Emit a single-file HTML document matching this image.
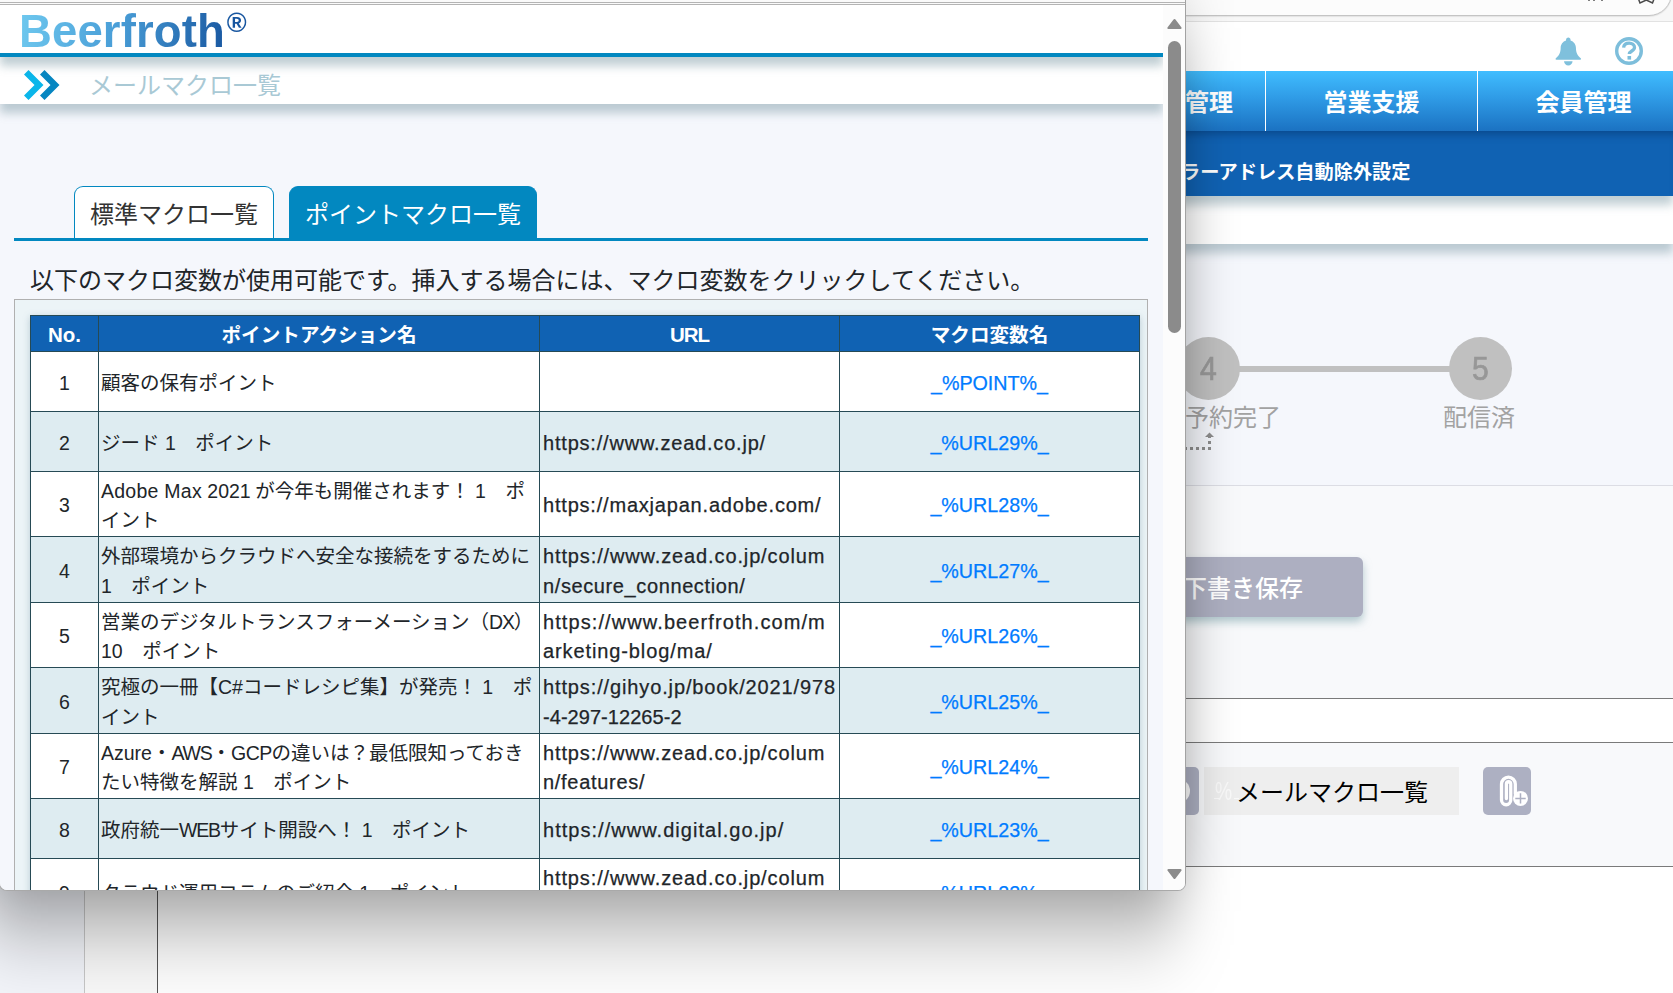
<!DOCTYPE html>
<html lang="ja">
<head>
<meta charset="utf-8">
<title>メールマクロ一覧</title>
<style>
*{box-sizing:border-box;margin:0;padding:0}
html,body{width:1673px;height:993px;overflow:hidden;background:#fff}
body{position:relative;font-family:"Liberation Sans","Noto Sans CJK JP",sans-serif;color:#212529}
.abs{position:absolute}
/* ---------- background page ---------- */
#bg{z-index:0;position:absolute;left:0;top:0;width:1673px;height:993px;overflow:hidden;background:#fff}
#chrome{position:absolute;left:0;top:0;width:1673px;height:22px;background:#f7f7f7;border-bottom:1px solid #e2e2e2}
#addr{position:absolute;left:900px;top:-30px;width:772px;height:46px;border-radius:23px;background:#fcfcfc;border:1px solid #c4c4c4;box-shadow:0 1px 1px rgba(0,0,0,.08)}
#hdr{position:absolute;left:0;top:22px;width:1673px;height:49px;background:#fff}
#nav{z-index:6;position:absolute;left:0;top:71px;width:1673px;height:60px;background:linear-gradient(#40bdff 0%,#2f9be6 45%,#1b72c2 100%)}
#nav .it{position:absolute;top:0;height:60px;width:212px;border-left:1px solid #fff;color:#fff;font-weight:bold;font-size:24px;line-height:63px;text-align:center;white-space:nowrap}
#sub{z-index:5;position:absolute;left:0;top:131px;width:1673px;height:65px;background:#1062b3;box-shadow:inset 0 9px 8px -6px rgba(0,40,90,.45), 0 9px 9px rgba(100,135,148,.4)}
#sub span{position:absolute;top:9px;line-height:65px;color:#fff;font-weight:bold;font-size:19.2px;white-space:nowrap}
#band{z-index:4;position:absolute;left:0;top:196px;width:1673px;height:48px;background:#fff;box-shadow:0 9px 9px rgba(100,135,148,.4)}
#main{position:absolute;left:157px;top:244px;width:1516px;height:241px;background:#f5f7fc}
#main2{position:absolute;left:157px;top:485px;width:1516px;height:213px;background:#f8f9fb;border-top:1px solid #dcdde4}
.circle{position:absolute;width:63px;height:63px;border-radius:50%;background:#c0c0c0;color:#979797;font-size:33.5px;line-height:63px;text-align:center;font-weight:normal;-webkit-text-stroke:.7px #979797}
.circle b{display:inline-block;font-weight:normal;transform:scaleX(.9)}
.steplbl{position:absolute;color:#a2a2a2;font-size:24px;line-height:30px;white-space:nowrap;font-weight:400}
#draft{position:absolute;left:1123px;top:557px;width:240px;height:60px;border-radius:6px;background:#adafc1;color:#fff;font-size:24px;line-height:64px;text-align:center;box-shadow:0 5px 8px rgba(120,160,170,.55);font-weight:500}
.hl{position:absolute;left:157px;width:1516px;height:1px;background:#7a7a7a}
#tool{position:absolute;left:157px;top:743px;width:1516px;height:123px;background:#f8f9fb}
.ibtn{position:absolute;top:767px;height:48px;border-radius:5px;background:#adb0c2}
#macbtn{position:absolute;left:1204px;top:767px;width:255px;height:48px;background:#eee;font-size:24px;line-height:48px;color:#000;white-space:nowrap}
#side{position:absolute;left:0;top:244px;width:158px;height:749px;background:linear-gradient(to right,#f4f6fb 84px,#fafafa 84px);border-right:1px solid #555}
#side i{position:absolute;left:84px;top:0;width:1px;height:749px;background:#c8c8c8}
/* ---------- popup ---------- */
#shadow{z-index:10;position:absolute;left:-16px;top:419.500px;width:1193px;height:490.500px;background:rgba(0,0,0,.47);filter:blur(28px);transform-origin:50% 100%;transform:scaleY(1.8)}
#pop{z-index:11;position:absolute;left:-1px;top:0;width:1187px;height:891px;overflow:hidden;background:#f5f7fc;border-radius:0 0 8px 8px;border-right:1px solid #a2a2a2;border-bottom:1px solid #a9a9a9;border-left:1px solid #a9a9a9}
#ptop{position:absolute;left:0;top:0;width:1187px;height:5px;background:#fafafa}
#ptop i{position:absolute;left:0;width:1187px;height:1px;background:#b4b4b4}
#content{position:absolute;left:0;top:5px;width:1163px;height:885px;overflow:hidden;background:#f5f7fc}
#logo{position:absolute;left:0;top:0;width:1163px;height:48px;background:#fff}
#logo span{position:absolute;left:19px;top:-1px;letter-spacing:.12px;font-size:45.5px;line-height:56px;font-weight:bold;white-space:nowrap;background:linear-gradient(100deg,#6fc9ef 0%,#4a9fd8 42%,#17559f 92%);-webkit-background-clip:text;background-clip:text;color:transparent;-webkit-text-fill-color:transparent}
#logo sup{font-size:27px;vertical-align:15.5px;line-height:0;margin-left:2px}
#bline{position:absolute;left:0;top:48px;width:1163px;height:4px;background:#0288c0}
#hshadow{position:absolute;left:0;top:0;width:1163px;height:52px;box-shadow:0 9px 9px rgba(100,135,148,.4)}
#ttl{position:absolute;left:0;top:52px;width:1163px;height:47px;background:#fff;box-shadow:0 9px 9px rgba(100,135,148,.4)}
#ttl span{position:absolute;left:89px;top:0;line-height:58px;font-size:24px;color:#a9c9d5;white-space:nowrap}
.tab{position:absolute;top:181px;height:53px;font-size:24px;line-height:56px;padding:0 15px;border:1px solid #0288c0;border-bottom:none;border-radius:9px 9px 0 0;white-space:nowrap}
#tabline{position:absolute;left:14px;top:233px;width:1134px;height:3px;background:#0288c0}
#lead{position:absolute;left:30px;top:257.5px;font-size:24px;line-height:36px;color:#212529;white-space:nowrap}
#box{position:absolute;left:14px;top:294px;width:1134px;height:620px;background:#ecf4f7;border:1px solid #b0b0b0}
table{position:absolute;left:15px;top:15px;width:1109px;border-collapse:collapse;table-layout:fixed;box-shadow:0 2px 7px rgba(90,130,150,.36);background:#fff;font-size:19.6px;line-height:29.4px}
th,td{border:1px solid #264a55;padding:4px 2px 0;vertical-align:middle;overflow:hidden;white-space:nowrap}
td.u,.l{font-size:20px;letter-spacing:.8px}
td.u,td.m{-webkit-text-stroke:.25px}
td{font-size:19.5px}
td.u{padding-left:3px}
.k{letter-spacing:-1.2px}
th{background:#1062b3;color:#fff;font-weight:bold;text-align:center;height:36px;line-height:30px;padding-top:3px}
td.c{text-align:center}
td.m{text-align:center;color:#007bff;font-size:19.7px}
tr.e td{background:#deecf1}
/* scrollbar */
#sb{position:absolute;left:1163px;top:5px;width:22px;height:885px;background:#fcfcfc}
#thumb{position:absolute;left:5px;top:36px;width:13px;height:292px;border-radius:7px;background:#8b8b8b}
</style>
</head>
<body>
<div id="bg">
  <div id="chrome"><div id="addr"></div><svg class="abs" style="left:1580px;top:0" width="90" height="6" viewBox="0 0 90 6"><path d="M58.500 -1L60 3 66.300 0 72.500 3 74 -1" fill="none" stroke="#4a4a4a" stroke-width="1.500"/><path d="M8 0h2M13 0h2M21 0h2" stroke="#555" stroke-width="1.600"/></svg></div>
  <div id="hdr">
    <svg class="abs" style="left:1553.700px;top:14.600px" width="28.600" height="30.600" viewBox="0 0 28 30"><path fill="#7fc0dc" d="M14 0.6c-1.2 0-2.2 1-2.2 2.1v0.7C8.600 4.400 6.500 7.400 6.500 10.900c0 5-1.700 7.400-4.700 9.900-0.600 0.500-0.300 1.500 0.500 1.500h23.400c0.800 0 1.100-1 0.500-1.500-3-2.500-4.700-4.900-4.700-9.900 0-3.500-2.100-6.500-5.300-7.500V2.700C16.200 1.600 15.200 0.600 14 0.600zM9.800 23.800c0.200 2.300 2 4.200 4.200 4.200s4-1.900 4.200-4.200z"/></svg>
    <svg class="abs" style="left:1614px;top:14px" width="30" height="30" viewBox="0 0 30 30"><circle cx="15" cy="15" r="12.300" fill="none" stroke="#7dbedb" stroke-width="3.400"/><path d="M9.600 11.600c0.300-2.800 2.500-4.400 5.500-4.400 3.100 0 5.400 1.700 5.400 4.300 0 3.600-5.200 3.400-5.200 6.600" fill="none" stroke="#7dbedb" stroke-width="3.300"/><rect x="13.500" y="20" width="3.600" height="3.600" fill="#7dbedb"/></svg>
  </div>
  <div id="nav">
    <div class="it" style="left:1053px;text-align:right;padding-right:32px">管理</div>
    <div class="it" style="left:1265px">営業支援</div>
    <div class="it" style="left:1477px">会員管理</div>
  </div>
  <div id="sub"><span style="left:1181px">ラーアドレス自動除外設定</span></div>
  <div id="band"></div>
  <div id="main"></div>
  <div id="main2"></div>
  <div class="abs" style="left:1209px;top:366px;width:271px;height:6px;background:#c0c0c0"></div>
  <div class="circle" style="left:1177px;top:337px"><b>4</b></div>
  <div class="circle" style="left:1449px;top:337px"><b>5</b></div>
  <div class="steplbl" style="left:1185px;top:403px">予約完了</div>
  <div class="steplbl" style="left:1443px;top:403px">配信済</div>
  <svg class="abs" style="left:1160px;top:430px" width="60" height="24" viewBox="0 0 60 24"><path d="M0 18.500H49.500V6" fill="none" stroke="#8d8d8d" stroke-width="3" stroke-dasharray="3 3"/><path d="M45 7L49.500 2.500 54 7z" fill="#8d8d8d"/></svg>
  <div id="draft">下書き保存</div>
  <div class="hl" style="top:698px"></div>
  <div class="hl" style="top:742px"></div>
  <div id="tool"></div>
  <div class="hl" style="top:866px"></div>
  <div class="ibtn" style="left:1151px;width:48px"><i style="position:absolute;left:15px;top:12px;width:24px;height:24px;border-radius:50%;background:#fff"></i></div>
  <div id="macbtn"><span style="position:absolute;left:11px;top:0;color:#f9f9f9;font-size:26px;font-weight:normal;transform:scaleX(.74);transform-origin:0 50%">%</span><i style="position:absolute;left:10px;top:31px;width:6px;height:1px;background:#fafafa"></i><i style="position:absolute;left:30px;top:31px;width:5px;height:1px;background:#fafafa"></i><span style="position:absolute;left:32px;top:2px">メールマクロ一覧</span></div>
  <div class="ibtn" style="left:1483px;width:48px">
    <svg width="48" height="48" viewBox="0 0 48 48"><path d="M32.300 27V17.100A6.900 6.900 0 0 0 18.500 17.100V33.100A4.620 4.620 0 0 0 27.750 33.100V16.800A2.180 2.180 0 0 0 23.400 16.800V31.500" fill="none" stroke="#fff" stroke-width="3.300" stroke-linecap="round"/><circle cx="37.500" cy="31.400" r="7.500" fill="#fff"/><path d="M37.500 26.200v10.400M32.300 31.400h10.400" stroke="#adb0c2" stroke-width="1.500"/></svg>
  </div>
  <div id="side"><i></i></div>
</div>

<div id="shadow"></div>
<div id="pop">
  <div id="ptop"><i style="top:2px"></i><i style="top:4px"></i></div>
  <div id="content">
    <div id="ttl">
      <svg class="abs" style="left:24px;top:13px" width="38" height="30" viewBox="0 0 38 30"><path d="M0 4.500L4.500 0 19.500 15 4.500 30 0 25.500 10.500 15z" fill="#0ab6ea"/><path d="M16 4.500L20.500 0 35.500 15 20.500 30 16 25.500 26.500 15z" fill="#0686c1"/></svg>
      <span>メールマクロ一覧</span>
    </div>
    <div id="hshadow"></div><div id="bline"></div>
    <div id="logo"><span>Beerfroth<sup>®</sup></span></div>
    <div class="tab" style="left:74px;background:#fff;color:#333">標準マクロ一覧</div>
    <div class="tab" style="left:289px;background:#0288c0;color:#fff">ポイントマクロ一覧</div>
    <div id="tabline"></div>
    <div id="lead">以下のマクロ変数が使用可能です。挿入する場合には、マクロ変数をクリックしてください。</div>
    <div id="box">
      <table>
        <colgroup><col style="width:68px"><col style="width:441px"><col style="width:300px"><col style="width:300px"></colgroup>
        <tr><th><span style="font-size:20.5px">No.</span></th><th>ポイントアクション名</th><th><span style="font-size:20.5px;letter-spacing:-1px">URL</span></th><th>マクロ変数名</th></tr>
        <tr style="height:60px"><td class="c">1</td><td>顧客の保有ポイント</td><td class="u"></td><td class="m">_%POINT%_</td></tr>
        <tr class="e" style="height:60px"><td class="c">2</td><td>ジード 1　ポイント</td><td class="u">https://www.zead.co.jp/</td><td class="m">_%URL29%_</td></tr>
        <tr style="height:65px"><td class="c">3</td><td><span style="letter-spacing:.25px">Adobe Max</span> 2021<span style="letter-spacing:-1px"> </span>が今年も開催されます！ 1　ポ<br>イント</td><td class="u">https://maxjapan.adobe.com/</td><td class="m">_%URL28%_</td></tr>
        <tr class="e" style="height:66px"><td class="c">4</td><td>外部環境からクラウドへ安全な接続をするために<br>1　ポイント</td><td class="u"><span style="letter-spacing:.87px">https://www.zead.co.jp/colum</span><br><span style="letter-spacing:.61px">n/secure_connection/</span></td><td class="m">_%URL27%_</td></tr>
        <tr style="height:65px"><td class="c">5</td><td>営業のデジタルトランスフォーメーション（<span class="k">DX</span>）<br>10　ポイント</td><td class="u"><span style="letter-spacing:1.09px">https://www.beerfroth.com/m</span><br><span style="letter-spacing:.89px">arketing-blog/ma/</span></td><td class="m">_%URL26%_</td></tr>
        <tr class="e" style="height:66px"><td class="c">6</td><td>究極の一冊【C#コードレシピ集】が発売！ 1　ポ<br>イント</td><td class="u"><span style="letter-spacing:.87px">https://gihyo.jp/book/2021/978</span><br><span style="letter-spacing:.05px">-4-297-12265-2</span></td><td class="m">_%URL25%_</td></tr>
        <tr style="height:65px"><td class="c">7</td><td>Azure・<span class="k">AWS</span>・<span class="k" style="letter-spacing:-.6px">GCP</span>の違いは？最低限知っておき<br>たい特徴を解説 1　ポイント</td><td class="u"><span style="letter-spacing:.87px">https://www.zead.co.jp/colum</span><br><span style="letter-spacing:.7px">n/features/</span></td><td class="m">_%URL24%_</td></tr>
        <tr class="e" style="height:60px"><td class="c">8</td><td>政府統一<span class="k">WEB</span>サイト開設へ！ 1　ポイント</td><td class="u"><span style="letter-spacing:1.03px">https://www.digital.go.jp/</span></td><td class="m">_%URL23%_</td></tr>
        <tr style="height:66px"><td class="c">9</td><td>クラウド運用コラムのご紹介 1　ポイント</td><td class="u"><span style="letter-spacing:.87px">https://www.zead.co.jp/colum</span><br>&nbsp;</td><td class="m">_%URL22%_</td></tr>
      </table>
    </div>
  </div>
  <div id="sb">
    <svg class="abs" style="left:3px;top:13px" width="17" height="12" viewBox="0 0 17 12"><path d="M8.500 2.200L14.400 9.900H2.600z" fill="#8b8b8b" stroke="#8b8b8b" stroke-width="2.400" stroke-linejoin="round"/></svg>
    <div id="thumb"></div>
    <svg class="abs" style="left:3px;top:863px" width="17" height="12" viewBox="0 0 17 12"><path d="M8.500 9.800L14.400 2.100H2.600z" fill="#8b8b8b" stroke="#8b8b8b" stroke-width="2.400" stroke-linejoin="round"/></svg>
  </div>
</div>
</body>
</html>
